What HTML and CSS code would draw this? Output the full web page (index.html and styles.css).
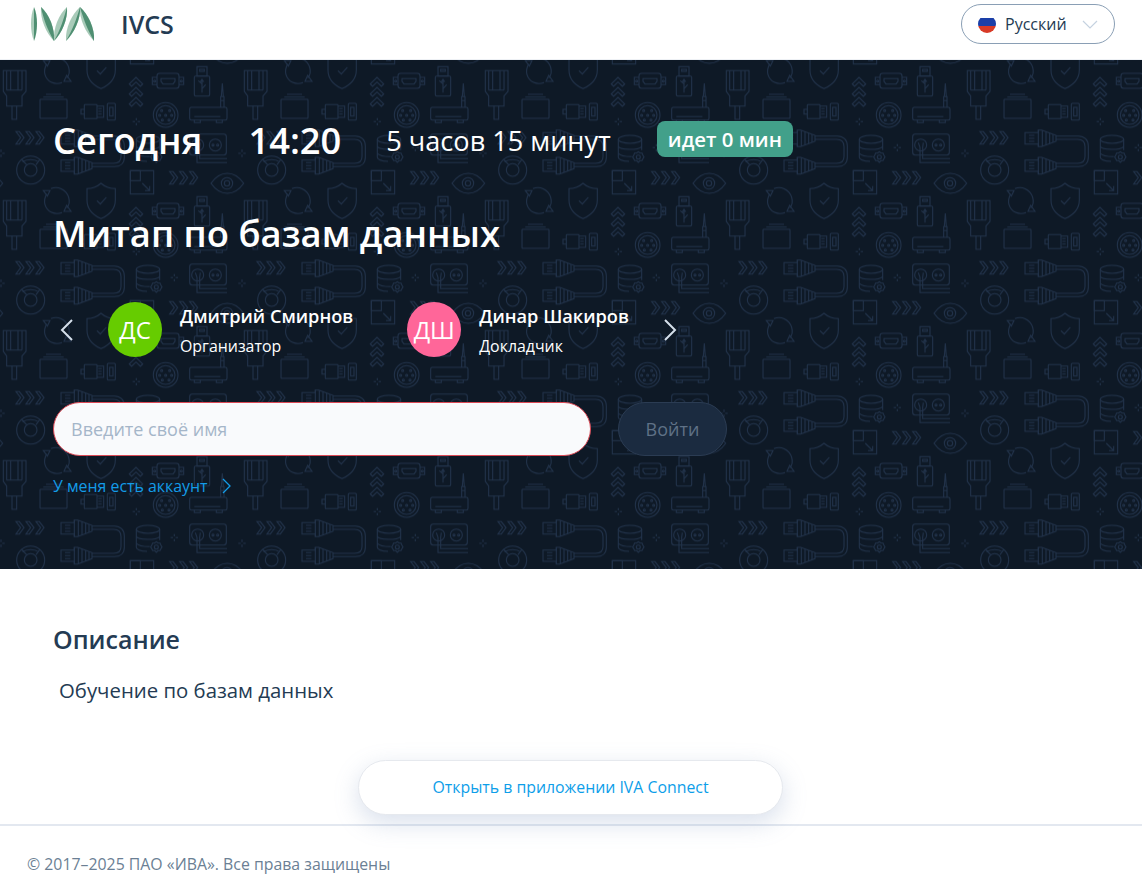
FILE: index.html
```html
<!DOCTYPE html>
<html lang="ru">

<head>
    <meta charset="UTF-8">
    <meta name="viewport" content="width=device-width, initial-scale=1.0">
    <title>Митап по базам данных</title>
    <link rel="stylesheet" href="styles.css">
</head>

<body>
    <header class="topbar">
        <div class="brand">
            <svg class="logo" width="66" height="36" viewBox="0 0 66 36">
                <!-- I -->
                <path d="M4 1C0 9 0 26 4 35Z" fill="#a9cbb9" />
                <path d="M4 1C8 9 8 26 4 35Z" fill="#4f8f72" />
                <!-- V -->
                <path d="M11 1C10 13 16 27 24 35C25 22 19 8 11 1Z" fill="#a9cbb9" />
                <path d="M11 1C13 12 18 25 24 35C25 22 19 8 11 1Z" fill="#4f8f72" />
                <path d="M37 1C38 13 32 27 24 35C23 22 29 8 37 1Z" fill="#a9cbb9" />
                <path d="M37 1C34 12 30 25 24 35C32 27 38 13 37 1Z" fill="#4f8f72" />
                <!-- A -->
                <path d="M50 1C42 8 35 22 36 35C44 27 51 13 50 1Z" fill="#a9cbb9" />
                <path d="M50 1C47 12 42 25 36 35C44 27 51 13 50 1Z" fill="#4f8f72" />
                <path d="M50 1C49 13 56 27 64 35C65 22 58 8 50 1Z" fill="#a9cbb9" />
                <path d="M50 1C53 12 58 25 64 35C65 22 58 8 50 1Z" fill="#4f8f72" />
            </svg>
            <span class="brand-name">IVCS</span>
        </div>
        <div class="lang">
            <svg class="flag" width="18" height="18" viewBox="0 0 18 18">
                <clipPath id="flagClip"><circle cx="9" cy="9" r="9" /></clipPath>
                <g clip-path="url(#flagClip)">
                    <rect width="18" height="6" fill="#ffffff" />
                    <rect y="3" width="18" height="8" fill="#1b3fa8" />
                    <rect y="11" width="18" height="7" fill="#d83a26" />
                </g>
            </svg>
            <span class="lang-name">Русский</span>
            <svg class="lang-arrow" width="16" height="9" viewBox="0 0 16 9">
                <path d="M1 1L8 8L15 1" />
            </svg>
        </div>
    </header>

    <section class="hero">
        <!-- background pattern -->
        <svg class="hero-pattern" width="100%" height="100%">
            <defs>
                <g id="plug">
                    <path d="M-48 38H-8V30H2L45 46V64L2 80H-8V72H-48Z" />
                    <path d="M-36 46H-20M-36 55H-20M-36 64H-20M-8 30V80M4 31V79M15 35V75M26 39V71M36 43V67" />
                </g>
                <g id="cable">
                    <use href="#plug" y="0" />
                    <use href="#plug" y="82" />
                    <path d="M45 48H112C130 48 142 60 142 78V112C142 130 130 140 112 140H45" />
                    <path d="M45 58H110C124 58 132 66 132 80V110C132 124 124 130 110 130H45" />
                </g>
                <g id="chevrons">
                    <path d="M0 0H10L24 18L10 37H0L14 18Z" />
                    <path d="M30 0H40L54 18L40 37H30L44 18Z" />
                    <path d="M60 0H70L84 18L70 37H60L74 18Z" />
                </g>
                <path id="spark" d="M0 -11V-4M0 4V11M-11 0H-4M4 0H11" />
                <pattern id="tile" patternUnits="userSpaceOnUse" width="241" height="130" patternTransform="translate(77 68.33)">
                    <g transform="scale(.33333) translate(0 -25)" class="pattern-lines">
                        <use href="#cable" />
                        <use href="#cable" x="723" />

                        <!-- database -->
                        <ellipse cx="213" cy="58" rx="35" ry="12" />
                        <path d="M178 58V112C178 118 190 124 210 124M248 58V90M178 80C184 90 235 92 248 80M178 100C184 108 200 110 218 110" />
                        <circle cx="238" cy="111" r="6" />
                        <path d="M238 95L243 99H249L252 106L255 111L252 116L249 122H243L238 127L233 122H227L224 116L221 111L224 106L227 99H233Z" />
                        <use href="#spark" x="292" y="83" />

                        <!-- socket -->
                        <rect x="338" y="42" width="110" height="63" rx="8" />
                        <circle cx="362" cy="75" r="18" />
                        <circle cx="415" cy="75" r="18" />
                        <circle cx="408" cy="75" r="3" />
                        <circle cx="422" cy="75" r="3" />
                        <path d="M355 68L360 82V128H450M370 68L368 82V116H450" />
                        <use href="#spark" x="495" y="100" />
                        <use href="#chevrons" x="540" y="35" />

                        <!-- resize -->
                        <rect x="160" y="152" width="70" height="70" />
                        <rect x="160" y="152" width="30" height="30" />
                        <path d="M196 190L218 212M218 198V212H204" />
                        <use href="#chevrons" x="278" y="155" />

                        <!-- eye -->
                        <path d="M402 190C430 150 472 150 500 190C472 230 430 230 402 190Z" />
                        <circle cx="450" cy="190" r="17" />
                        <circle cx="450" cy="190" r="8" />

                        <!-- disc -->
                        <circle cx="584" cy="150" r="42" />
                        <circle cx="584" cy="150" r="19" />
                        <path d="M556 118L572 134M600 134L612 118M560 126C572 116 596 116 608 126" />

                        <!-- shield -->
                        <path d="M72 190C86 202 100 206 115 206V240C115 268 94 286 72 296C50 286 30 268 30 240V206C44 206 58 202 72 190Z" />
                        <path d="M60 242L70 252L88 232" />

                        <!-- up chevrons -->
                        <path d="M157 282L177 262L197 282L190 289L177 276L164 289Z" />
                        <path d="M157 312L177 292L197 312L190 319L177 306L164 319Z" />
                        <path d="M157 342L177 322L197 342L190 349L177 336L164 349Z" />

                        <!-- vga -->
                        <rect x="240" y="250" width="66" height="45" rx="8" />
                        <path d="M240 262H226V284H240M306 262H320V284H306" />
                        <circle cx="233" cy="273" r="3" />
                        <circle cx="313" cy="273" r="3" />
                        <path d="M252 266H294V274L288 282H258L252 274Z" />

                        <!-- usb -->
                        <rect x="360" y="230" width="30" height="28" />
                        <rect x="368" y="238" width="14" height="6" />
                        <rect x="352" y="258" width="46" height="60" rx="4" />
                        <path d="M375 268V308M375 282L364 272M375 296L386 284M375 268L371 274H379Z" />

                        <!-- vga cable -->
                        <path d="M502 242H570V304L558 318V348H512V318L502 304Z" />
                        <path d="M512 242V300M524 242V300M546 242V300M558 242V300M512 300H558" />
                        <path d="M528 348V388H542V348" />

                        <!-- refresh -->
                        <path d="M645 206C664 198 690 206 698 232C702 246 698 258 692 264" />
                        <path d="M678 278C656 286 634 276 627 254C624 242 626 232 632 222" />
                        <path d="M622 212L642 212L634 228Z" />
                        <path d="M705 274L684 274L692 256Z" />

                        <!-- router -->
                        <rect x="338" y="352" width="112" height="38" rx="5" />
                        <path d="M431 352V320H441V352M433 320L436 280L439 320M431 332H441" />
                        <path d="M352 390V398H370V390M418 390V398H436V390M352 380H430" />

                        <!-- folder -->
                        <rect x="612" y="328" width="81" height="57" rx="2" />
                        <path d="M622 321H683M630 313H675" />

                        <!-- usb power -->
                        <rect x="22" y="344" width="38" height="42" rx="2" />
                        <path d="M22 358H12V372H22M60 348H80V382H60M64 356H74M64 364H74M64 372H74" />
                        <rect x="91" y="340" width="24" height="50" rx="3" />
                        <rect x="98" y="352" width="10" height="26" />

                        <!-- din -->
                        <circle cx="266" cy="375" r="37" />
                        <circle cx="266" cy="375" r="28" />
                        <circle cx="254" cy="362" r="3" />
                        <circle cx="278" cy="362" r="3" />
                        <circle cx="248" cy="376" r="3" />
                        <circle cx="284" cy="376" r="3" />
                        <circle cx="256" cy="390" r="3" />
                        <circle cx="276" cy="390" r="3" />
                        <circle cx="266" cy="376" r="3" />
                        <use href="#spark" x="178" y="395" />
                    </g>
                </pattern>
            </defs>
            <rect width="100%" height="100%" fill="url(#tile)" />
        </svg>

        <div class="hero-inner">
            <div class="meeting-time">
                <span class="day">Сегодня</span>
                <span class="clock">14:20</span>
                <span class="duration">5 часов 15 минут</span>
                <span class="status">идет 0 мин</span>
            </div>

            <h1 class="meeting-title">Митап по базам данных</h1>

            <div class="people">
                <svg class="arrow arrow-prev" width="13" height="22" viewBox="0 0 13 22">
                    <path d="M12 1L2 11L12 21" />
                </svg>
                <div class="person">
                    <div class="avatar avatar-green">ДС</div>
                    <div class="person-info">
                        <div class="person-name">Дмитрий Смирнов</div>
                        <div class="person-role">Организатор</div>
                    </div>
                </div>
                <div class="person">
                    <div class="avatar avatar-pink">ДШ</div>
                    <div class="person-info">
                        <div class="person-name">Динар Шакиров</div>
                        <div class="person-role">Докладчик</div>
                    </div>
                </div>
                <svg class="arrow arrow-next" width="13" height="22" viewBox="0 0 13 22">
                    <path d="M1 1L11 11L1 21" />
                </svg>
            </div>

            <div class="join">
                <input class="name-input" type="text" placeholder="Введите своё имя">
                <button class="join-btn">Войти</button>
            </div>

            <a class="account-link" href="#">
                У меня есть аккаунт
                <svg width="9" height="16" viewBox="0 0 9 16">
                    <path d="M1 1L8 8L1 15" />
                </svg>
            </a>
        </div>
    </section>

    <section class="about">
        <h2 class="about-title">Описание</h2>
        <p class="about-text">Обучение по базам данных</p>
    </section>

    <div class="open-app">
        <a class="open-app-btn" href="#">Открыть в приложении IVA Connect</a>
    </div>

    <footer class="footer">© 2017–2025 ПАО «ИВА». Все права защищены</footer>
</body>

</html>
```

FILE: styles.css
```css
* {
    box-sizing: border-box;
}

body {
    margin: 0;
    font-family: "Open Sans", "Noto Sans", sans-serif;
    color: #243b53;
    background-color: #fff;
}

/* Top bar */
.topbar {
    height: 60px;
    display: flex;
    align-items: flex-start;
    justify-content: space-between;
    padding: 4px 27px 0 30px;
    background-color: #fff;
    border-bottom: 1px solid #eef1f5;
}

.brand {
    display: flex;
    align-items: center;
    height: 40px;
}

.logo {
    display: block;
}

.brand-name {
    margin-left: 25px;
    font-size: 25px;
    font-weight: 600;
    color: #243b53;
}

.lang {
    width: 154px;
    height: 40px;
    display: flex;
    align-items: center;
    padding-left: 16px;
    border: 1px solid #8a9fb5;
    border-radius: 20px;
}

.lang-name {
    margin-left: 9px;
    font-size: 16px;
    color: #243b53;
}

.lang-arrow {
    margin-left: 15px;
}

.lang-arrow path {
    fill: none;
    stroke: #c5d2e0;
    stroke-width: 1.2;
}

/* Dark block */
.hero {
    position: relative;
    height: 509px;
    background-color: #0e1926;
    color: #fff;
}

.hero-pattern {
    position: absolute;
    top: 0;
    left: 0;
}

.pattern-lines,
.pattern-lines * {
    fill: none;
    stroke: #21324a;
    stroke-width: 3.2;
}

.hero-inner {
    position: relative;
    padding: 59px 0 0 53px;
}

.meeting-time {
    display: flex;
    align-items: center;
    height: 42px;
}

.day,
.clock {
    font-size: 36.3px;
    font-weight: 600;
}

.clock {
    margin-left: 46px;
}

.duration {
    margin-left: 45px;
    font-size: 27.1px;
}

.status {
    margin: -2px 0 0 46px;
    padding: 0 11px;
    height: 36px;
    line-height: 36px;
    border-radius: 8px;
    background-color: #42a08a;
    font-size: 20.4px;
    font-weight: 600;
}

.meeting-title {
    margin: 47px 0 0;
    font-size: 36.4px;
    line-height: 50px;
    font-weight: 600;
}

.people {
    display: flex;
    align-items: center;
    margin-top: 44px;
    height: 55px;
}

.arrow path {
    fill: none;
    stroke: #d5dfea;
    stroke-width: 2;
}

.arrow-prev {
    margin-left: 7px;
}

.arrow-next {
    margin-left: 35px;
}

.person {
    display: flex;
    align-items: center;
}

.person:first-of-type {
    margin-left: 35px;
}

.person + .person {
    margin-left: 54px;
}

.avatar {
    width: 54px;
    height: 55px;
    border-radius: 50%;
    display: flex;
    align-items: center;
    justify-content: center;
    font-size: 24px;
    color: #fff;
}

.avatar-green {
    background-color: #66cc00;
}

.avatar-pink {
    background-color: #ff6699;
}

.person-info {
    margin-left: 18px;
}

.person-name {
    font-size: 18.2px;
    line-height: 28px;
    font-weight: 600;
}

.person-role {
    margin-top: 4px;
    font-size: 15.9px;
    line-height: 24px;
}

.join {
    display: flex;
    margin-top: 45px;
}

.name-input {
    width: 538px;
    height: 54px;
    padding: 0 17px;
    border: 1px solid #dc4a56;
    border-radius: 27px;
    background-color: #f9fafc;
    font-family: inherit;
    font-size: 18px;
    color: #243b53;
    outline: none;
}

.name-input::placeholder {
    color: #a5b6c9;
    opacity: 1;
}

.join-btn {
    width: 109px;
    height: 54px;
    margin-left: 27px;
    border: 1px solid #2b3c53;
    border-radius: 27px;
    background-color: #1b2b40;
    font-family: inherit;
    font-size: 18px;
    color: #5f7186;
}

.account-link {
    display: inline-flex;
    align-items: center;
    margin-top: 18px;
    font-size: 15.9px;
    line-height: 24px;
    color: #139ce8;
    text-decoration: none;
}

.account-link svg {
    margin-left: 14px;
}

.account-link path {
    fill: none;
    stroke: #139ce8;
    stroke-width: 1.3;
}

/* Description */
.about {
    padding: 53px 0 0 53px;
}

.about-title {
    margin: 0;
    font-size: 25px;
    line-height: 34px;
    font-weight: 600;
    color: #243b53;
}

.about-text {
    margin: 21px 0 0 6px;
    font-size: 20.35px;
    line-height: 26px;
    color: #243b53;
}

.open-app {
    display: flex;
    justify-content: center;
    margin-top: 57px;
    padding-bottom: 9px;
    padding-right: 1px;
    border-bottom: 2px solid #e3e8f0;
}

.open-app-btn {
    width: 425px;
    height: 55px;
    line-height: 53px;
    text-align: center;
    border: 1px solid #e6e9ee;
    border-radius: 28px;
    background-color: #fff;
    box-shadow: 0 8px 24px rgba(120, 145, 185, 0.28);
    font-size: 15.85px;
    color: #0d9ee9;
    text-decoration: none;
}

.footer {
    padding: 26px 0 0 27px;
    font-size: 15.85px;
    line-height: 24px;
    color: #6b7f94;
}
```
